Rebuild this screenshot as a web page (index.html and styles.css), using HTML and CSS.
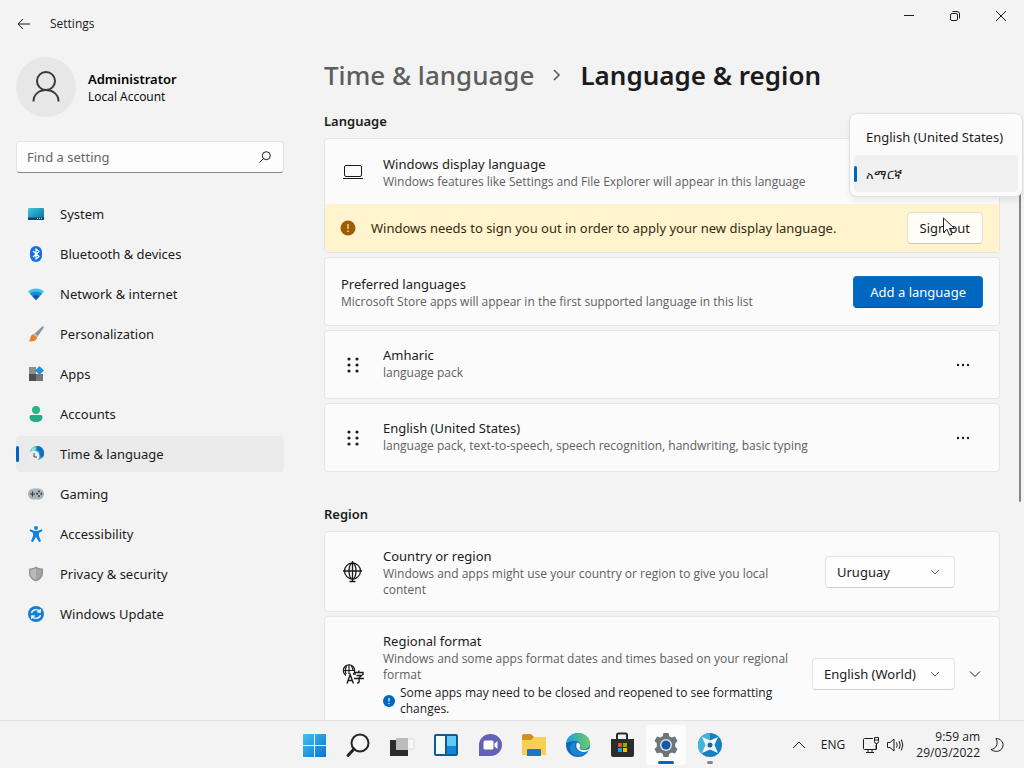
FILE: index.html
```html
<!DOCTYPE html>
<html lang="en">
<head>
  <meta charset="UTF-8">
  <meta name="viewport" content="width=device-width, initial-scale=1.0">
  <title>Settings</title>
  <link rel="stylesheet" href="styles.css">
</head>
<body>
  <div class="window">
    <header class="titlebar">
      <button class="back" aria-label="Back">
        <svg width="16" height="16" viewBox="0 0 16 16"><path d="M14 8H2M7 3L2 8l5 5" class="line"/></svg>
      </button>
      <span class="app-name">Settings</span>
      <div class="window-controls">
        <button aria-label="Minimize"><svg width="12" height="12" viewBox="0 0 12 12"><path d="M1 5.500h10" class="line"/></svg></button>
        <button aria-label="Restore"><svg width="12" height="12" viewBox="0 0 12 12"><rect x="1.500" y="3.500" width="7" height="7" rx="1.500" class="line"/><path d="M3.500 1.500H8a2.500 2.500 0 0 1 2.500 2.500v4.500" class="line"/></svg></button>
        <button aria-label="Close"><svg width="12" height="12" viewBox="0 0 12 12"><path d="M1 1l10 10M11 1L1 11" class="line"/></svg></button>
      </div>
    </header>

    <div class="content">
      <aside class="sidebar">
        <div class="profile">
          <div class="avatar">
            <svg width="32" height="36" viewBox="0 0 32 36"><circle cx="16" cy="12" r="9" class="person"/><path d="M3.500 32.500c0-7 5.500-11.500 12.500-11.500s12.500 4.500 12.500 11.500" class="person"/></svg>
          </div>
          <div>
            <div class="user-name">Administrator</div>
            <div class="user-type">Local Account</div>
          </div>
        </div>

        <label class="search">
          <input type="text" placeholder="Find a setting" aria-label="Find a setting">
          <svg width="14" height="14" viewBox="0 0 14 14"><circle cx="8.300" cy="5.700" r="4" class="line"/><path d="M5.400 8.600L1.500 12.500" class="line"/></svg>
        </label>

        <nav class="nav">
          <a href="#system">
            <svg width="16" height="16" viewBox="0 0 16 16"><defs><linearGradient id="sys" x1="0" y1="0" x2="1" y2="1"><stop offset="0" stop-color="#3ccbe0"/><stop offset="1" stop-color="#0b6a9f"/></linearGradient></defs><rect y="2" width="16" height="12" rx="1" fill="url(#sys)"/><path d="M0 11.500h16V13a1 1 0 0 1-1 1H1a1 1 0 0 1-1-1z" fill="#0d4469"/><path d="M9 12.500h1m1 0h1m1 0h1" stroke="#8fd0e8"/></svg>
            System
          </a>
          <a href="#bluetooth">
            <svg width="16" height="16" viewBox="0 0 16 16"><rect x="2" width="12" height="16" rx="6" fill="#1372e0"/><path d="M5 5l6 5.500L8 13V3l3 2.500L5 11" fill="none" stroke="#fff" stroke-width="1.200"/></svg>
            Bluetooth &amp; devices
          </a>
          <a href="#network">
            <svg width="16" height="16" viewBox="0 0 16 16"><path d="M0 5.500C4 1.500 12 1.500 16 5.500L8 14z" fill="#3fc3ec"/><path d="M2 7.700c3.500-3 8.500-3 12 0L8 14z" fill="#1b8ad8"/><path d="M4.500 10.300c2-1.600 5-1.600 7 0L8 14z" fill="#1556ab"/></svg>
            Network &amp; internet
          </a>
          <a href="#personalization">
            <svg width="16" height="16" viewBox="0 0 16 16"><path d="M14.500.3c1.200-.3 1.600.6 1 1.700L9 11.200 5.800 8.500z" fill="#8c9299"/><path d="M5.800 8.200L9 11c.3 3.500-4 5.300-8.500 4 2-1 1.500-2 2-4 .4-1.700 1.800-2.800 3.300-2.800z" fill="#e8812b"/><path d="M6.600 7.300l3.300 2.800-1 1.200-3.200-2.900z" fill="#c4c8cc"/></svg>
            Personalization
          </a>
          <a href="#apps">
            <svg width="16" height="16" viewBox="0 0 16 16"><path d="M1 1h7v7H1z" fill="#8b8d8f"/><path d="M1 8h7v7H1z" fill="#4d4f51"/><path d="M8 8h7v7H8z" fill="#737577"/><path d="M11.500 0L16 4.500 11.500 9 7 4.500z" fill="#2391e0"/></svg>
            Apps
          </a>
          <a href="#accounts">
            <svg width="16" height="16" viewBox="0 0 16 16"><circle cx="8" cy="4" r="4" fill="#28b58b"/><path d="M3.500 9h9a2 2 0 0 1 2 2c0 3-2.500 5-6.500 5s-6.500-2-6.500-5a2 2 0 0 1 2-2z" fill="#20ac84"/></svg>
            Accounts
          </a>
          <a href="#time" class="active">
            <svg width="16" height="16" viewBox="0 0 16 16"><circle cx="9" cy="7" r="7" fill="#20abc8"/><path d="M9 0a7 7 0 0 1 5 12l-3-3 1-3-3-2z" fill="#176fbd"/><path d="M4 2l3-1 1 2-2 2-3 .500z" fill="#8ce0da"/><circle cx="6" cy="10" r="5.500" fill="#eeeaf0"/><path d="M6 7v4h3" fill="none" stroke="#384653"/></svg>
            Time &amp; language
          </a>
          <a href="#gaming">
            <svg width="16" height="16" viewBox="0 0 16 16"><rect y="2.500" width="16" height="11" rx="5.500" fill="#a9b4bc"/><path d="M2 8h5M4.500 5.500v5" stroke="#34424b" stroke-width="1.200"/><circle cx="11" cy="5.500" r="1" fill="#34424b"/><circle cx="13.300" cy="7.800" r="1" fill="#34424b"/><circle cx="9" cy="7.800" r="1" fill="#34424b"/><circle cx="11" cy="10" r="1" fill="#34424b"/></svg>
            Gaming
          </a>
          <a href="#accessibility">
            <svg width="16" height="16" viewBox="0 0 16 16"><circle cx="8" cy="2" r="2" fill="#1683d8"/><path d="M2.300 3.200L6 4.800h4l3.700-1.600q1.300.8.300 2L11 7v3l1.900 5q-.6 1.400-2 .8L8 11l-2.900 4.800q-1.400.6-2-.8L5 10V7L2 5.200q-1-1.200.3-2z" fill="#1683d8"/></svg>
            Accessibility
          </a>
          <a href="#privacy">
            <svg width="16" height="16" viewBox="0 0 16 16"><path d="M8 .5c2 1.500 4.500 2 7 2V7c0 4-2.500 6.500-7 8.500C3.500 13.500 1 11 1 7V2.500c2.500 0 5-.5 7-2z" fill="#8d9195"/><path d="M8 2c1.600 1 3.500 1.600 5.700 1.700V7c0 3.200-1.900 5.300-5.700 7z" fill="#a1a5a8"/><path d="M8 2C6.400 3 4.500 3.600 2.300 3.700V7c0 3.200 1.900 5.300 5.700 7z" fill="#b8bbbe"/></svg>
            Privacy &amp; security
          </a>
          <a href="#update">
            <svg width="16" height="16" viewBox="0 0 16 16"><circle cx="8" cy="8" r="8" fill="#1680cf"/><path d="M3.500 7C4.300 3.300 9.500 2.500 12 5.500M12.300 3v3H9.200M12.500 9C11.700 12.700 6.500 13.500 4 10.500M3.700 13v-3h3.100" fill="none" stroke="#e6f5ff" stroke-width="1.300"/></svg>
            Windows Update
          </a>
        </nav>
      </aside>

      <main class="main">
        <h1 class="breadcrumb">
          <a href="#time">Time &amp; language</a>
          <svg width="12" height="14" viewBox="0 0 12 14"><path d="M3 2l5 5-5 5" fill="none" stroke="#5d5d5d" stroke-width="1.600"/></svg>
          <span>Language &amp; region</span>
        </h1>

        <h2>Language</h2>
        <section class="card display-language">
          <div class="row">
            <span class="icon"><svg width="20" height="16" viewBox="0 0 20 16"><rect x="1.500" y="1.500" width="17" height="11" rx="1.500" class="line"/><path d="M0 14.500h20" class="line"/></svg></span>
            <div class="text">
              <div class="name">Windows display language</div>
              <div class="desc">Windows features like Settings and File Explorer will appear in this language</div>
            </div>
          </div>
          <div class="banner">
            <svg width="16" height="16" viewBox="0 0 16 16"><circle cx="8" cy="8" r="7.500" fill="#9d5d00"/><path d="M8 4v5M8 10.500V12" stroke="#fff4ce" stroke-width="1.200"/></svg>
            <p>Windows needs to sign you out in order to apply your new display language.</p>
            <button class="button">Sign out</button>
            <svg class="cursor" width="14" height="20" viewBox="0 0 14 20"><path d="M1.500 1v14.500l3.500-3.300 2.500 6 2.500-1-2.500-5.700h5z" fill="#fff" stroke="#222"/></svg>
          </div>
          <div class="popup" role="listbox" aria-label="Windows display language">
            <button role="option" aria-selected="false">English (United States)</button>
            <button role="option" aria-selected="true" class="selected" lang="am">አማርኛ</button>
          </div>
        </section>

        <section class="card">
          <div class="row">
            <div class="text">
              <div class="name">Preferred languages</div>
              <div class="desc">Microsoft Store apps will appear in the first supported language in this list</div>
            </div>
            <button class="button primary">Add a language</button>
          </div>
        </section>

        <section class="card language">
          <div class="row">
            <span class="icon"><svg width="12" height="16" viewBox="0 0 12 16"><g fill="#1b1b1b"><circle cx="2" cy="2" r="1.600"/><circle cx="10" cy="2" r="1.600"/><circle cx="2" cy="8" r="1.600"/><circle cx="10" cy="8" r="1.600"/><circle cx="2" cy="14" r="1.600"/><circle cx="10" cy="14" r="1.600"/></g></svg></span>
            <div class="text">
              <div class="name">Amharic</div>
              <div class="desc">language pack</div>
            </div>
            <button class="more" aria-label="More options for Amharic"><svg width="14" height="4" viewBox="0 0 14 4"><g fill="#1b1b1b"><circle cx="2" cy="2" r="1.200"/><circle cx="7" cy="2" r="1.200"/><circle cx="12" cy="2" r="1.200"/></g></svg></button>
          </div>
        </section>

        <section class="card language">
          <div class="row">
            <span class="icon"><svg width="12" height="16" viewBox="0 0 12 16"><g fill="#1b1b1b"><circle cx="2" cy="2" r="1.600"/><circle cx="10" cy="2" r="1.600"/><circle cx="2" cy="8" r="1.600"/><circle cx="10" cy="8" r="1.600"/><circle cx="2" cy="14" r="1.600"/><circle cx="10" cy="14" r="1.600"/></g></svg></span>
            <div class="text">
              <div class="name">English (United States)</div>
              <div class="desc">language pack, text-to-speech, speech recognition, handwriting, basic typing</div>
            </div>
            <button class="more" aria-label="More options for English (United States)"><svg width="14" height="4" viewBox="0 0 14 4"><g fill="#1b1b1b"><circle cx="2" cy="2" r="1.200"/><circle cx="7" cy="2" r="1.200"/><circle cx="12" cy="2" r="1.200"/></g></svg></button>
          </div>
        </section>

        <h2 class="second">Region</h2>
        <section class="card region">
          <div class="row">
            <span class="icon"><svg width="20" height="22" viewBox="0 0 20 22"><g fill="none" stroke="#1b1b1b" stroke-width="1.300"><circle cx="9.500" cy="10" r="8"/><ellipse cx="9.500" cy="10" rx="3.500" ry="8"/><path d="M0 10h19M9.500 0v21M6.500 20.500h6"/></g></svg></span>
            <div class="text">
              <label class="name" for="country">Country or region</label>
              <div class="desc">Windows and apps might use your country or region to give you local content</div>
            </div>
            <div class="combo country">
              <select id="country"><option>Uruguay</option></select>
              <svg width="10" height="6" viewBox="0 0 10 6"><path d="M1 1l4 4 4-4" class="soft-line"/></svg>
            </div>
          </div>
        </section>

        <section class="card region">
          <div class="row">
            <span class="icon"><svg width="22" height="20" viewBox="0 0 22 20"><g fill="none" stroke="#1b1b1b" stroke-width="1.200"><circle cx="7" cy="6.500" r="5.700"/><path d="M1.500 6.500h11M7 .8v11M4.500 2c-1.500 3-1.500 6 0 9M9.500 2c1 2 1.500 3 1.300 4.500"/></g><path d="M4 10h7v9H4z" fill="#fbfbfb"/><g fill="none" stroke="#1b1b1b" stroke-width="1.400"><path d="M5 19.500l3.200-9 3.200 9M6 16.500h4.400M13 11V8.500h8V11M16.800 6.500v2M14.500 11.500h5l-2.400 2.300V18q0 1-2 1M12 14.500h10"/></g></svg></span>
            <div class="text">
              <label class="name" for="format">Regional format</label>
              <div class="desc">Windows and some apps format dates and times based on your regional format</div>
              <div class="note">
                <svg width="12" height="12" viewBox="0 0 12 12"><circle cx="6" cy="6" r="6" fill="#0067c0"/><path d="M6 3v3.500M6 8v1.200" stroke="#fff" stroke-width="1.200"/></svg>
                <span>Some apps may need to be closed and reopened to see formatting changes.</span>
              </div>
            </div>
            <div class="combo">
              <select id="format"><option>English (World)</option></select>
              <svg width="10" height="6" viewBox="0 0 10 6"><path d="M1 1l4 4 4-4" class="soft-line"/></svg>
            </div>
            <button class="expand" aria-label="Show more settings"><svg width="12" height="8" viewBox="0 0 12 8"><path d="M1 1.500l5 5 5-5" class="line"/></svg></button>
          </div>
        </section>
        <div class="scroll-thumb"></div>
      </main>
    </div>
  </div>

  <footer class="taskbar">
    <div class="pinned">
      <button aria-label="Start"><svg width="24" height="24" viewBox="0 0 24 24"><defs><linearGradient id="win" x1="0" y1="0" x2="1" y2="1"><stop offset="0" stop-color="#44c2f0"/><stop offset="1" stop-color="#0874d0"/></linearGradient></defs><path d="M1 1h11v11H1zM13 1h11v11H13zM1 13h11v11H1zM13 13h11v11H13z" fill="url(#win)"/></svg></button>
      <button aria-label="Search"><svg width="24" height="24" viewBox="0 0 24 24"><circle cx="14" cy="10" r="8.500" fill="#f8f8f8" stroke="#242424" stroke-width="2"/><path d="M8 16l-6 6.500" stroke="#242424" stroke-width="3" stroke-linecap="round"/></svg></button>
      <button aria-label="Task view"><svg width="24" height="24" viewBox="0 0 24 24"><path d="M7 6h17v10H7z" fill="#f8f8f8" stroke="#ddd"/><path d="M0 7h18v16H0z" fill="#2b2b2b"/><path d="M6 5h12v12H6z" fill="#bcbcbc"/></svg></button>
      <button aria-label="Widgets"><svg width="24" height="24" viewBox="0 0 24 24"><rect y="1" width="24" height="22" rx="2" fill="#125b91"/><path d="M2 3h9v18H2z" fill="#f2fafa"/><path d="M13 3h9v10h-9z" fill="#65c9f7"/><path d="M13 13h9v8h-9z" fill="#1484da"/></svg></button>
      <button aria-label="Chat"><svg width="24" height="24" viewBox="0 0 24 24"><path d="M1 23V12A11.500 11 0 1 1 12.500 23z" fill="#6260b9"/><rect x="5.500" y="7.500" width="10" height="9" rx="1.500" fill="#fff"/><path d="M16.500 10.500l3-2.500v8l-3-2.500z" fill="#fff"/></svg></button>
      <button aria-label="File Explorer"><svg width="24" height="24" viewBox="0 0 24 24"><path d="M0 3a2 2 0 0 1 2-2h7l3 3v5H0z" fill="#cf9417"/><path d="M0 7h9l3-3h11a1 1 0 0 1 1 1v17H0z" fill="#f9cf52"/><path d="M5 23v-6a1 1 0 0 1 1-1h12a1 1 0 0 1 1 1v6z" fill="#1976c7"/></svg></button>
      <button aria-label="Edge"><svg width="24" height="24" viewBox="0 0 24 24"><defs><linearGradient id="edge" x1="0" y1="0" x2="1" y2="0"><stop offset="0" stop-color="#1e9ce0"/><stop offset="1" stop-color="#69cf63"/></linearGradient></defs><circle cx="12" cy="12" r="12" fill="#1268b6"/><path d="M0 11C1 4 6 0 12 0c7 0 12 4.500 12 10 0 4-3 6.500-6.500 6.500-3 0-4.500-1-3.500-3 1-3-1-5.500-5-5.500C5 8 1 9 0 11z" fill="url(#edge)"/><path d="M10 9c-3 6 2 12.500 12 9.500C17 25 4 24 4 15c0-3 2.500-5.500 6-6z" fill="#1686d5"/><path d="M11 9.500c-2 4 0 9 6 9.500 2 0 4-.3 5.500-1.200l1.500-2.300c-2 1-4.500 1.500-6.500 1.500-3 0-4.500-1.500-3.500-3.500.5-2-.5-3.500-3-4z" fill="#f3f3f3"/></svg></button>
      <button aria-label="Microsoft Store"><svg width="24" height="24" viewBox="0 0 24 24"><path d="M7 7V2a1.500 1.500 0 0 1 1.500-1.500h7A1.500 1.500 0 0 1 17 2v5" fill="none" stroke="#292929" stroke-width="2"/><path d="M1 6h23v16a2 2 0 0 1-2 2H3a2 2 0 0 1-2-2z" fill="#2c2c2c"/><path d="M8 10h4v4H8z" fill="#f25022"/><path d="M13 10h4v4h-4z" fill="#7fba00"/><path d="M8 15h4v4H8z" fill="#00a4ef"/><path d="M13 15h4v4h-4z" fill="#ffb900"/></svg></button>
      <button aria-label="Settings" class="current"><svg width="24" height="24" viewBox="0 0 24 24"><path d="M9.500 0h5l.8 3.200 2.500 1.400 3.200-1L23.500 8l-2.300 2.300v3.400l2.300 2.300-2.500 4.400-3.200-1-2.500 1.400-.8 3.200h-5l-.8-3.200-2.500-1.400-3.200 1L.5 16l2.300-2.300v-3.400L.5 8 3 3.600l3.200 1 2.500-1.400z" fill="#6d747a"/><circle cx="12" cy="12" r="6" fill="#d9e2e8"/><circle cx="12" cy="12" r="4.500" fill="#14599d"/></svg></button>
      <button aria-label="Ninja" class="running"><svg width="24" height="24" viewBox="0 0 24 24"><circle cx="12" cy="12" r="12" fill="#1580bd"/><path d="M12 0a12 12 0 0 0-8.500 20.500L12 12z" fill="#44b4dc"/><path d="M4 4l8 3.500L20 4l-3.500 8 3.500 8-8-3.500L4 20l3.500-8z" fill="#f2f7fa"/><circle cx="12" cy="12" r="2.500" fill="#1a6798"/></svg></button>
    </div>
    <div class="tray">
      <button aria-label="Show hidden icons"><svg width="14" height="8" viewBox="0 0 14 8"><path d="M1 7l6-6 6 6" class="line"/></svg></button>
      <button class="lang">ENG</button>
      <button class="status" aria-label="Network and sound">
        <svg width="18" height="18" viewBox="0 0 18 18"><path d="M11 2.500H2.500a1 1 0 0 0-1 1v9a1 1 0 0 0 1 1H14V9M4 16.500h8M6 13.500v3M10 13.500v3M12.500 1.500h4v4a2 2 0 0 1-4 0zM12.500 4h4M14.500 7.500v6" class="line"/></svg>
        <svg width="18" height="18" viewBox="0 0 18 18"><path d="M1.500 6.500v5H4l4 3.500V3L4 6.500zM10.500 6.500q1.500 2.500 0 5M13 5q2.500 4 0 8M15.300 3.500q3 5.500 0 11" class="line"/></svg>
      </button>
      <button class="clock"><span>9:59 am</span><span>29/03/2022</span></button>
      <button aria-label="Focus assist"><svg width="14" height="16" viewBox="0 0 14 16"><path d="M6 1.500c4.500 0 7.500 3.500 7 7.500-.7 5-7.500 7.300-12 3.500 4.500-.5 8-5 5-11z" class="line"/></svg></button>
    </div>
  </footer>
</body>
</html>
```
FILE: styles.css
```css
* { box-sizing: border-box; }
body { margin: 0; height: 100vh; display: flex; flex-direction: column; overflow: hidden; background: #f3f3f3; color: #1b1b1b; font-family: "Noto Sans", "Open Sans", sans-serif; font-size: 13px; line-height: 20px; }
button, input, select { font: inherit; color: inherit; }
button { border: 0; padding: 0; background: none; }
svg { display: block; flex: none; overflow: visible; }
a { color: inherit; text-decoration: none; }
p { margin: 0; }
.line { fill: none; stroke: #1b1b1b; }
.soft-line { fill: none; stroke: #666; }

.window { flex: 1; min-height: 0; display: flex; flex-direction: column; overflow: hidden; }
.titlebar { height: 48px; flex: none; display: flex; align-items: center; padding-left: 16px; }
.back { width: 16px; margin-right: 18px; }
.app-name, .user-type, .desc, .note, .tray { font-family: "Open Sans", "Noto Sans", sans-serif; font-size: 12px; }
.window-controls { display: flex; align-self: flex-start; margin-left: auto; }
.window-controls button { width: 46px; height: 32px; display: grid; place-items: center; }
.content { flex: 1; min-height: 0; display: flex; }

.sidebar { width: 300px; flex: none; padding: 9px 16px 0; }
.profile { display: flex; align-items: center; gap: 12px; margin-bottom: 24px; }
.avatar { width: 60px; height: 60px; border-radius: 50%; background: #e7e7e7; display: grid; place-items: center; }
.person { fill: none; stroke: #3a3a3a; stroke-width: 2; }
.user-name { font-weight: 600; color: #000; line-height: 20px; }
.user-type { line-height: 16px; color: #000; }
.search { height: 32px; display: flex; align-items: center; padding: 0 11px 0 10px; margin-bottom: 23px; background: #fdfdfd; border: 1px solid #e3e3e3; border-bottom-color: #868686; border-radius: 4px; }
.search input { flex: 1; min-width: 0; border: 0; padding: 0; background: none; outline: 0; }
.search input::placeholder { color: #666; opacity: 1; }
.nav { display: flex; flex-direction: column; gap: 4px; }
.nav a { height: 36px; display: flex; align-items: center; gap: 16px; padding-left: 12px; border-radius: 4px; }
.nav .active { background: #eaeaea; padding-left: 0; gap: 0; }
.nav .active::before { content: ""; width: 3px; height: 16px; margin-right: 9px; border-radius: 2px; background: #0067c0; }
.nav .active svg { margin-right: 16px; }

.main { position: relative; flex: 1; min-width: 0; padding: 10px 24px 0; }
.breadcrumb { display: flex; align-items: center; gap: 17px; margin: 0 0 19px; font-size: 26px; font-weight: 600; line-height: 34px; color: #1b1b1b; }
.breadcrumb a { color: #5d5d5d; font-weight: 500; }
h2 { margin: 0 0 7px; font-size: 13px; font-weight: 600; line-height: 20px; }
h2.second { margin-top: 32px; }
.card { margin-bottom: 4px; background: #fbfbfb; border: 1px solid #e5e5e5; border-radius: 4px; }
.row { min-height: 67px; display: flex; align-items: center; gap: 18px; padding: 14px 16px 13px; }
.icon { width: 24px; flex: none; display: grid; place-items: center; }
.text { flex: 1; min-width: 0; }
.name { display: block; line-height: 20px; }
.desc { line-height: 16px; color: #606060; }
.note { display: flex; align-items: center; gap: 5px; line-height: 16px; margin-top: 2px; }
.language .text { padding-bottom: 4px; }
.region .desc, .region .note { max-width: 412px; }

.display-language { position: relative; }
.display-language .row { min-height: 65px; }
.banner { position: relative; height: 48px; display: flex; align-items: center; gap: 15px; padding: 0 16px 0 15px; background: #fff4ce; color: #352a10; }
.banner p { flex: 1; }
.button { height: 32px; padding: 0 12px; border: 1px solid #e5dfcd; border-bottom-color: #cfc8b5; border-radius: 4px; background: #fffdf6; color: #1b1b1b; }
.primary { padding: 0 16px; background: #0067c0; border-color: #0f70c4; border-bottom-color: #00539b; color: #fff; }
.cursor { position: absolute; right: 43px; top: 13px; }
.popup { position: absolute; top: -26px; right: -24px; width: 174px; padding: 4px; background: #fbfbfb; border: 1px solid #e0e0e0; border-radius: 8px; box-shadow: 0 3px 6px rgba(0,0,0,0.08); z-index: 2; }
.popup button { display: flex; align-items: center; width: 100%; height: 37px; padding-left: 12px; border-radius: 4px; white-space: nowrap; }
.popup .selected { padding-left: 0; background: #f0f0f0; }
.popup .selected::before { content: ""; width: 3px; height: 16px; margin-right: 9px; border-radius: 2px; background: #0067c0; }
.more { width: 40px; height: 32px; display: grid; place-items: center; }

.combo { display: grid; align-items: center; }
.combo select, .combo svg { grid-area: 1 / 1; }
.combo svg { justify-self: end; margin-right: 15px; pointer-events: none; }
.combo select { appearance: none; height: 32px; width: 100%; padding: 0 38px 0 11px; background: #fefefe; border: 1px solid #e3e3e3; border-bottom-color: #cdcdcd; border-radius: 4px; }
.country { width: 130px; margin-right: 28px; }
.region .row { gap: 12px; }
.region .icon { margin-right: 6px; }
.expand { width: 16px; display: grid; place-items: center; }
.scroll-thumb { position: absolute; top: 140px; right: 3px; width: 2px; height: 314px; border-radius: 1px; background: #858585; }

.taskbar { height: 48px; flex: none; display: grid; grid-template-columns: 1fr auto 1fr; align-items: center; background: #f3f3f3; border-top: 1px solid #e2e2e2; }
.pinned { grid-column: 2; display: flex; gap: 4px; }
.pinned button { position: relative; width: 40px; height: 40px; display: grid; place-items: center; border-radius: 4px; }
.pinned .current { background: #fcfcfc; }
.pinned .current::after, .pinned .running::after { content: ""; position: absolute; bottom: 1px; left: 50%; width: 16px; height: 3px; margin-left: -8px; border-radius: 2px; background: #0067c0; }
.pinned .running::after { width: 6px; margin-left: -3px; background: #858585; }
.tray { display: flex; align-items: center; justify-content: flex-end; padding-right: 20px; line-height: 16px; }
.lang { margin-left: 15px; }
.status { display: flex; gap: 6px; margin-left: 17px; }
.clock { display: flex; flex-direction: column; align-items: flex-end; margin: 0 10px 0 12px; }
```
